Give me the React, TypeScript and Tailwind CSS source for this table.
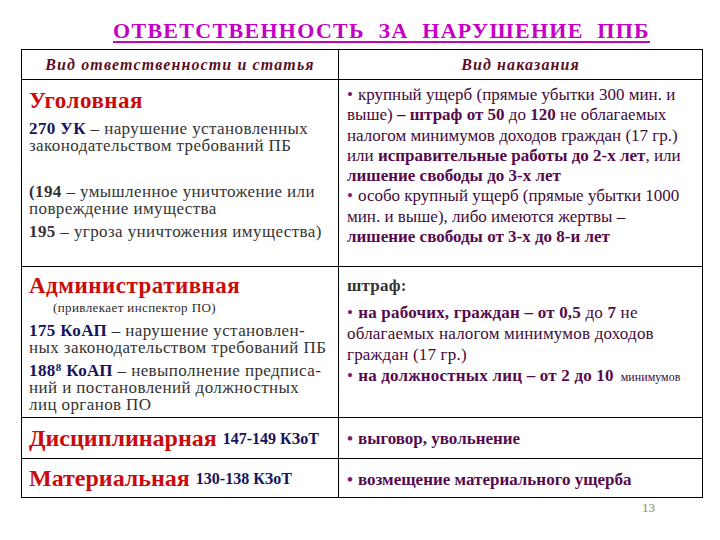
import React from "react";

const B = ({ children }: { children: React.ReactNode }) => (
  <span className="font-bold text-[#550a4e]">{children}</span>
);

const Dot = () => <span className="text-[#7a1a70] mr-[5px]">•</span>;

const L = ({ children }: { children: React.ReactNode }) => (
  <div className="whitespace-nowrap">{children}</div>
);

export default function App() {
  return (
    <div className="w-[720px] h-[540px] bg-white font-['Liberation_Serif',serif] text-[#333]">
      <div className="pt-[18px] pl-[113px]">
        <div className="text-[22px] font-bold text-[#c400c4] underline decoration-[2px] underline-offset-[3px] leading-[26px] tracking-[1.3px] whitespace-pre">
          ОТВЕТСТВЕННОСТЬ  ЗА  НАРУШЕНИЕ  ППБ
        </div>
      </div>
      <div className="ml-[21px] mt-[5px] w-[682px] border border-black">
        {/* header */}
        <div className="flex h-[30px] border-b border-black">
          <div className="w-[317px] border-r border-black flex items-center justify-center text-[16px] tracking-[1.1px] italic font-bold text-[#5b0f1f]">
            Вид ответственности и статья
          </div>
          <div className="flex-1 flex items-center justify-center text-[16px] tracking-[1.1px] italic font-bold text-[#5b0f1f]">
            Вид наказания
          </div>
        </div>
        {/* row 1 */}
        <div className="flex h-[187px] border-b border-black">
          <div className="w-[317px] border-r border-black pl-[7px] pt-[8px] text-[17px] leading-[17px] tracking-[0.4px]">
            <div className="text-[23px] font-bold text-[#cc0a0a] leading-[26px] tracking-[0.5px]">Уголовная</div>
            <div className="mt-[6px]">
              <L>
                <span className="font-bold text-[#14145e]">270 УК</span> – нарушение установленных
              </L>
              <L>законодательством требований ПБ</L>
            </div>
            <div className="mt-[29px]">
              <L>
                <span className="font-bold">(194</span> – умышленное уничтожение или
              </L>
              <L>повреждение имущества</L>
            </div>
            <div className="mt-[6px]">
              <L>
                <span className="font-bold">195</span> – угроза уничтожения имущества)
              </L>
            </div>
          </div>
          <div className="flex-1 pl-[8px] pt-[5px] text-[17px] leading-[20.3px] text-[#3f0a3c]">
            <L>
              <Dot />крупный ущерб (прямые убытки 300 мин. и
            </L>
            <L>
              выше) <B>– штраф от 50</B> до <B>120</B> не облагаемых
            </L>
            <L>налогом минимумов доходов граждан (17 гр.)</L>
            <L>
              или <B>исправительные работы до 2-х лет</B>, или
            </L>
            <L>
              <B>лишение свободы до 3-х лет</B>
            </L>
            <L>
              <Dot />особо крупный ущерб (прямые убытки 1000
            </L>
            <L>мин. и выше), либо имеются жертвы –</L>
            <L>
              <B>лишение свободы от 3-х до 8-и лет</B>
            </L>
          </div>
        </div>
        {/* row 2 */}
        <div className="flex h-[151px] border-b border-black">
          <div className="w-[317px] border-r border-black pl-[7px] pt-[6px] text-[17px] leading-[17px] tracking-[0.4px]">
            <div className="text-[23px] font-bold text-[#cc0a0a] leading-[26px] tracking-[0.5px]">Административная</div>
            <div className="pl-[24px] text-[13px] leading-[16px] mt-[1px] text-[#2a2a2a]">(привлекает инспектор ПО)</div>
            <div className="mt-[6px]">
              <L>
                <span className="font-bold text-[#14145e]">175 КоАП</span> – нарушение установлен-
              </L>
              <L>ных законодательством требований ПБ</L>
            </div>
            <div className="mt-[6px]">
              <L>
                <span className="font-bold text-[#14145e]">
                  188<sup className="text-[11px]">8</sup> КоАП
                </span>{" "}
                – невыполнение предписа-
              </L>
              <L>ний и постановлений должностных</L>
              <L>лиц органов ПО</L>
            </div>
          </div>
          <div className="flex-1 pl-[8px] pt-[8px] text-[17px] leading-[21px] tracking-[0.2px] text-[#3f0a3c]">
            <div className="font-bold text-[#333] mb-[6px]">штраф:</div>
            <L>
              <Dot />
              <B>на рабочих, граждан – от 0,5</B> до <B>7</B> не
            </L>
            <L>облагаемых налогом минимумов доходов</L>
            <L>граждан (17 гр.)</L>
            <L>
              <Dot />
              <B>на должностных лиц – от 2 до 10</B>
              <span className="ml-[7px] text-[12px] tracking-[0px]">минимумов</span>
            </L>
          </div>
        </div>
        {/* row 3 */}
        <div className="flex h-[41px] border-b border-black">
          <div className="w-[317px] border-r border-black pl-[7px] flex items-center">
            <span className="text-[24px] font-bold text-[#cc0a0a]">Дисциплинарная</span>
            <span className="ml-[6px] pt-[2px] text-[16px] font-bold text-[#14145e]">147-149 КЗоТ</span>
          </div>
          <div className="flex-1 pl-[8px] pt-[2px] flex items-center text-[17px] font-bold text-[#550a4e]">
            <Dot />выговор, увольнение
          </div>
        </div>
        {/* row 4 */}
        <div className="flex h-[38px]">
          <div className="w-[317px] border-r border-black pl-[7px] flex items-center">
            <span className="text-[24px] font-bold text-[#cc0a0a]">Материальная</span>
            <span className="ml-[6px] pt-[2px] text-[16px] font-bold text-[#14145e]">130-138 КЗоТ</span>
          </div>
          <div className="flex-1 pl-[8px] pt-[4px] flex items-center text-[17px] font-bold text-[#550a4e]">
            <Dot />возмещение материального ущерба
          </div>
        </div>
      </div>
      <div className="ml-[642px] mt-[2px] text-[13px] text-[#888] leading-[15px]">13</div>
    </div>
  );
}
